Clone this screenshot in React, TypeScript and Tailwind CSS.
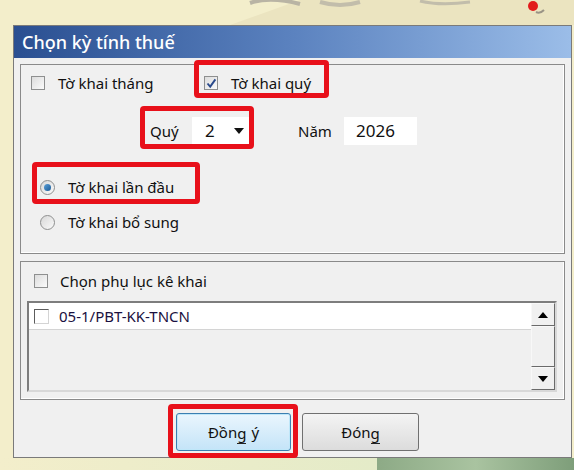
import React from 'react';

const font = { fontFamily: '"Noto Sans", "DejaVu Sans", sans-serif' };

function Check({ checked = false }: { checked?: boolean }) {
  return (
    <span className="inline-flex h-[14px] w-[14px] shrink-0 items-center justify-center border border-[#8e8f8f] bg-gradient-to-br from-[#dcdcdc] to-[#fbfbfb]">
      {checked && (
        <svg width="11" height="11" viewBox="0 0 11 11">
          <path d="M1.5 5.5 L4.2 8.6 L9.4 1.4" fill="none" stroke="#2a4a8c" strokeWidth="1.9" />
        </svg>
      )}
    </span>
  );
}

function Radio({ checked = false }: { checked?: boolean }) {
  return (
    <span className="inline-flex h-[15px] w-[15px] shrink-0 items-center justify-center rounded-full border border-[#8e8f8f] bg-gradient-to-br from-[#d8d8d8] to-[#fafafa]">
      {checked && (
        <span className="h-[7px] w-[7px] rounded-full bg-gradient-to-br from-[#5aa0d8] to-[#1a5a96]" />
      )}
    </span>
  );
}

function Highlight({ className }: { className: string }) {
  return <div className={`pointer-events-none absolute rounded-[4px] border-[5px] border-[#e8101a] ${className}`} />;
}

export default function App() {
  return (
    <div className="relative h-[470px] w-[574px] overflow-hidden bg-[#f3eecb] text-[15px] text-[#111]" style={font}>
      {/* decorative banner behind the dialog */}
      <div className="relative h-[25px]">
        <svg className="absolute left-0 top-0" width="574" height="25" viewBox="0 0 574 25">
          <path d="M230 25 L300 0 L574 0 L574 25 Z" fill="#ebe4c0" />
          <path d="M250 3 Q270 -4 300 4" fill="none" stroke="#b9b4a4" strokeWidth="4" />
          <path d="M320 2 Q340 8 360 2" fill="none" stroke="#c2bdab" strokeWidth="4" />
          <path d="M420 1 Q440 6 470 2" fill="none" stroke="#c2bdab" strokeWidth="3" />
          <circle cx="533" cy="6" r="5" fill="#e21b1b" />
          <path d="M536 12 Q540 14 544 10" fill="none" stroke="#9a9486" strokeWidth="2" />
        </svg>
      </div>

      <div className="relative ml-[13px] mr-[2px] border border-[#7a7a7a]">
        <div className="flex h-[32px] items-center bg-gradient-to-r from-[#2a4f91] via-[#5b82bf] to-[#9bbde8] pl-[8px] text-[18px] font-medium text-white">
          Chọn kỳ tính thuế
        </div>

        <div className="bg-[#f0f0f0] px-[6px] pt-[6px]">
          {/* group 1 */}
          <div className="h-[190px] border border-[#8a8a8a] shadow-[inset_-1px_-1px_0_#fff]">
            <div className="mt-[11px] flex h-[14px] items-center pl-[10px]">
              <Check />
              <span className="ml-[13px] w-[146px]">Tờ khai tháng</span>
              <Check checked />
              <span className="ml-[13px]">Tờ khai quý</span>
            </div>

            <div className="mt-[27px] flex h-[28px] items-center">
              <span className="ml-[129px] w-[42px]">Quý</span>
              <div className="flex h-[28px] w-[58px] items-center justify-between bg-white pl-[13px] pr-[6px] text-[17px]">
                <span>2</span>
                <svg width="10" height="6" viewBox="0 0 10 6">
                  <path d="M0 0 L10 0 L5 6 Z" fill="#111" />
                </svg>
              </div>
              <span className="ml-[48px] w-[46px]">Năm</span>
              <div className="flex h-[28px] w-[73px] items-center bg-white pl-[12px] text-[17px]">2026</div>
            </div>

            <div className="mt-[35px] flex h-[14px] items-center pl-[19px]">
              <Radio checked />
              <span className="ml-[13px]">Tờ khai lần đầu</span>
            </div>
            <div className="mt-[21px] flex h-[14px] items-center pl-[19px]">
              <Radio />
              <span className="ml-[13px]">Tờ khai bổ sung</span>
            </div>
          </div>

          {/* group 2 */}
          <div className="mt-[7px] h-[139px] border border-[#8a8a8a] shadow-[inset_-1px_-1px_0_#fff]">
            <div className="mt-[12px] flex h-[14px] items-center pl-[13px]">
              <Check />
              <span className="ml-[12px]">Chọn phụ lục kê khai</span>
            </div>
            <div className="ml-[6px] mr-[7px] mt-[13px] flex h-[91px] border-2 border-[#7d7d7d] border-b-[#d8d8d8] border-r-[#d8d8d8]">
              <div className="flex-1">
                <div className="flex h-[27px] items-center border-b border-[#d4d4d4] bg-white pl-[5px]">
                  <span className="inline-flex h-[15px] w-[15px] border border-[#5c5c5c] border-b-[#d4d4d4] border-r-[#d4d4d4] bg-white" />
                  <span className="ml-[10px] text-[#1a1040]">05-1/PBT-KK-TNCN</span>
                </div>
              </div>
              <div className="flex w-[24px] flex-col bg-[#f0f0f0]">
                <div className="flex h-[23px] items-center justify-center border border-[#f8f8f8] border-b-[#6a6a6a] border-r-[#6a6a6a]">
                  <svg width="10" height="6" viewBox="0 0 10 6"><path d="M0 6 L10 6 L5 0 Z" fill="#000" /></svg>
                </div>
                <div className="flex-1 border border-[#f8f8f8] border-b-[#6a6a6a] border-r-[#6a6a6a]" />
                <div className="flex h-[23px] items-center justify-center border border-[#f8f8f8] border-b-[#6a6a6a] border-r-[#6a6a6a]">
                  <svg width="10" height="6" viewBox="0 0 10 6"><path d="M0 0 L10 0 L5 6 Z" fill="#000" /></svg>
                </div>
              </div>
            </div>
          </div>

          {/* buttons */}
          <div className="flex h-[57px] items-start pt-[13px]">
            <button className="ml-[156px] flex h-[38px] w-[115px] items-center justify-center rounded-[3px] border border-[#3c7fb1] bg-gradient-to-b from-[#eaf6fd] to-[#c4e4f8] shadow-[inset_0_0_0_1px_#bfe7f9]">
              <span>Đồn</span>
              <span className="mt-[4px] border-b border-[#222] leading-[19px]">g</span>
              <span className="ml-[5px]">ý</span>
            </button>
            <button className="ml-[11px] flex h-[38px] w-[117px] items-center justify-center rounded-[3px] border border-[#707070] bg-gradient-to-b from-[#f4f4f4] to-[#dcdcdc]">
              <span>Đón</span>
              <span className="mt-[4px] border-b border-[#222] leading-[19px]">g</span>
            </button>
          </div>
        </div>

        <Highlight className="left-[180px] top-[34px] h-[38px] w-[135px]" />
        <Highlight className="left-[126px] top-[80px] h-[43px] w-[114px]" />
        <Highlight className="left-[18px] top-[136px] h-[42px] w-[168px]" />
        <Highlight className="left-[154px] top-[378px] h-[54px] w-[130px]" />
      </div>

      <div className="flex h-[20px]">
        <div className="w-[377px] bg-gradient-to-r from-[#f3eecb] to-[#e4ebc8]" />
        <div className="flex-1 bg-gradient-to-r from-[#8daa86] via-[#a9c3a0] to-[#7e9e7a]" />
      </div>
    </div>
  );
}
